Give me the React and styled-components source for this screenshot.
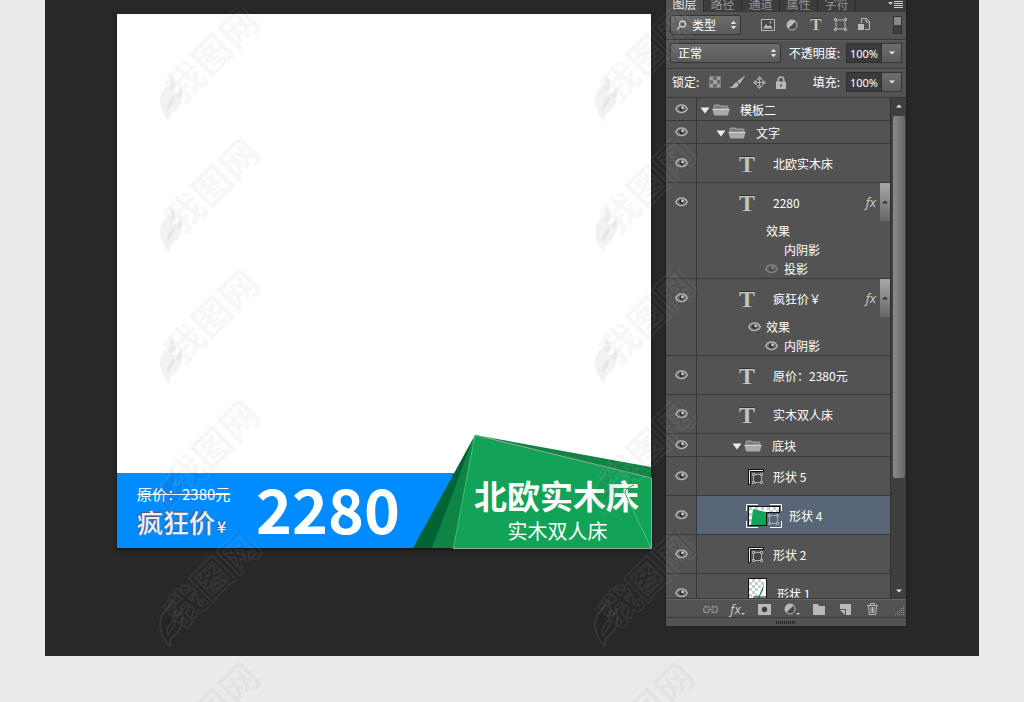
import React from 'react';
import styled, { createGlobalStyle, css } from 'styled-components';

const GlobalStyle = createGlobalStyle`
  * {
    box-sizing: border-box;
  }

  body {
    margin: 0;
    background: #ebebed;
    font-family: 'Noto Sans CJK SC', sans-serif;
  }

  button, select, input {
    margin: 0;
    padding: 0;
    border: 0;
    background: none;
    color: inherit;
    font: inherit;
  }

  svg {
    display: block;
    flex: none;
  }
`;

const Page = styled.div`
  position: relative;
  min-height: 100vh;
  padding: 0 45px 46px;
  overflow: hidden;
`;

const Workspace = styled.main`
  display: flex;
  align-items: flex-start;
  gap: 15px;
  padding: 0 73px 30px 72px;
  background: #282828;
`;

/* ---------- canvas ---------- */

const Canvas = styled.section`
  flex: 1;
  display: flex;
  flex-direction: column;
  justify-content: flex-end;
  aspect-ratio: 1;
  margin-top: 14px;
  background: #fff;
  box-shadow: 0 2px 4px rgba(0, 0, 0, 0.5);
`;

const Banner = styled.div`
  position: relative;
  display: flex;
  align-items: center;
  height: 75px;
  padding: 0 12px 0 20px;
  background: #008cff;
  color: #fff;
  white-space: nowrap;
`;

const PriceColumn = styled.div`
  width: 119px;
  padding-top: 6px;
`;

const OldPrice = styled.del`
  display: block;
  font-size: 15px;
  line-height: 20px;
`;

const CrazyPrice = styled.p`
  margin: 0;
  color: #eceef2;
  font-size: 26px;
  font-weight: 500;
  line-height: 36px;
  text-shadow: -1px -1px 1px #5a5560;
`;

const Yen = styled.small`
  margin-left: 2px;
  font-size: 16px;
`;

const BigPrice = styled.strong`
  padding-bottom: 6px;
  font-size: 61px;
  line-height: 68px;
`;

const Fold = styled.svg`
  position: absolute;
  right: -1px;
  bottom: -1px;
`;

const ProductTitle = styled.div`
  position: relative;
  margin-left: auto;
  padding-bottom: 2px;
  text-align: center;
`;

const Headline = styled.h1`
  margin: 0 0 2px;
  font-size: 33px;
  line-height: 40px;
`;

const Subline = styled.p`
  margin: 0;
  padding-left: 2px;
  font-size: 20px;
  line-height: 28px;
`;

/* ---------- panel ---------- */

const Panel = styled.aside`
  width: 240px;
  background: #535353;
  color: #fff;
  font-size: 12px;
  box-shadow: 0 0 2px #111;
`;

const Tabs = styled.nav`
  display: flex;
  height: 12px;
  overflow: hidden;
  background: #3c3c3c;
`;

const Tab = styled.button`
  width: 38px;
  height: 12px;
  padding-bottom: 4px;
  border-right: 1px solid #2a2a2a;
  background: ${({ $active }) => ($active ? '#535353' : 'transparent')};
  color: ${({ $active }) => ($active ? '#e4e4e4' : '#979797')};
  line-height: 8px;
`;

const PanelMenu = styled.button`
  margin: 0 3px 0 auto;
`;

const ToolRow = styled.div`
  display: flex;
  align-items: center;
  height: 29px;
  padding: 0 4px 2px;
  border-bottom: 1px solid #383838;
  box-shadow: inset 0 1px #5c5c5c;
`;

const FilterRow = styled(ToolRow)`
  height: 28px;
  box-shadow: none;
`;

const SelectBox = styled.div`
  position: relative;
  width: ${({ $width }) => $width}px;
  height: 20px;
  border: 1px solid #363636;
  border-radius: 2px;
  background: linear-gradient(#6d6d6d, #5a5a5a);

  select {
    width: 100%;
    height: 18px;
    padding-left: ${({ $inset }) => $inset}px;
    appearance: none;
    line-height: 18px;
  }

  svg {
    position: absolute;
    top: 4px;
    pointer-events: none;
  }

  svg.arrows {
    right: 3px;
  }

  svg.search {
    left: 5px;
  }
`;

const IconButton = styled.button`
  display: flex;
  align-items: center;
  justify-content: center;
  width: 24px;
  height: 18px;
  color: #b9b9b9;
`;

const FilterIcons = styled.div`
  display: flex;
  margin-left: 15px;
`;

const FilterSwitch = styled.button`
  width: 9px;
  height: 18px;
  margin-left: auto;
  border: 1px solid #303030;
  background: linear-gradient(#8a8a8a 0 8px, #3e3e3e 8px);
`;

const LockIcons = styled.div`
  display: flex;
  margin-left: 5px;

  button {
    width: 22px;
  }
`;

const Text = styled.span`
  line-height: 16px;
`;

const LockLabel = styled(Text)`
  padding-left: 2px;
`;

const ValueField = styled.label`
  display: flex;
  align-items: center;
  margin-left: auto;
  line-height: 16px;
`;

const ValueInput = styled.input`
  width: 36px;
  height: 20px;
  margin-left: 6px;
  border: 1px solid #303030;
  background: #3b3b3b;
  font-family: 'Noto Sans', sans-serif;
  font-size: 11px;
  text-align: center;
`;

const DropButton = styled.button`
  display: flex;
  align-items: center;
  justify-content: center;
  width: 20px;
  height: 20px;
  border: 1px solid #363636;
  border-left: 0;
  background: linear-gradient(#6d6d6d, #5a5a5a);
`;

const ListArea = styled.div`
  display: flex;
  height: 501px;
  border-bottom: 1px solid #383838;
`;

const LayerList = styled.ul`
  flex: 1;
  margin: 0;
  padding: 0;
  overflow: hidden;
  list-style: none;
`;

const LayerItem = styled.li`
  display: flex;
  border-bottom: 1px solid #383838;
`;

const EyeCell = styled.div`
  width: 31px;
  border-right: 1px solid #383838;
`;

const EyeButton = styled.button`
  display: flex;
  align-items: center;
  justify-content: center;
  width: 30px;
  height: ${({ $folder }) => ($folder ? 22 : 38)}px;
`;

const LayerBody = styled.div`
  flex: 1;
  background: ${({ $selected }) => ($selected ? '#596678' : 'transparent')};
`;

const LayerHead = styled.div`
  display: flex;
  align-items: center;
  height: 38px;
  padding-top: 1px;

  ${({ $depth }) =>
    $depth !== undefined &&
    css`
      height: 22px;
      padding-top: 2px;
      padding-left: ${3 + $depth * 16}px;
    `}
`;

const FolderMark = styled.span`
  display: flex;
  align-items: center;
  gap: 2px;
  width: 40px;
`;

const thumbPlace = {
  type: { left: 42, box: 34 },
  corner: { left: 51, box: 25 },
  selected: { left: 49, box: 43 },
  tall: { left: 51, box: 29 },
};

const Thumb = styled.span`
  width: ${({ $kind }) => thumbPlace[$kind].box}px;
  margin-left: ${({ $kind }) => thumbPlace[$kind].left}px;
`;

const TypeMark = styled.span`
  color: #c4c4c4;
  font-family: 'Liberation Serif', serif;
  font-size: ${({ $size }) => $size}px;
  font-weight: bold;
  line-height: 22px;
  text-shadow: 0 -1px #333;
`;

const FxMark = styled.span`
  color: #cfcfcf;
  font-family: 'Open Sans', sans-serif;
  font-size: 13px;
  font-style: italic;
  line-height: 18px;
`;

const FxEnd = styled.span`
  display: flex;
  align-items: center;
  gap: 4px;
  height: 38px;
  margin: -1px 0 0 auto;
`;

const FxToggle = styled.button`
  display: flex;
  align-items: center;
  justify-content: center;
  width: 10px;
  height: 38px;
  background: linear-gradient(#a9a9a9, #666);
`;

const EffectLine = styled.div`
  display: flex;
  align-items: center;
  height: 19px;
  padding-left: ${({ $child }) => ($child ? 68 : 51)}px;
`;

const EffectEye = styled.span`
  width: ${({ $child }) => ($child ? 19 : 18)}px;
  opacity: ${({ $dim }) => ($dim ? 0.5 : 1)};
`;

const ScrollTrack = styled.div`
  display: flex;
  flex-direction: column;
  align-items: center;
  width: 16px;
  padding: 6px 0 5px;
  border-left: 1px solid #303030;
  background: #3f3f3f;
`;

const ScrollThumb = styled.div`
  width: 12px;
  height: 362px;
  margin: 8px 0 auto;
  border-radius: 2px;
  background: linear-gradient(90deg, #8a8a8a, #686868);
`;

const Footer = styled.footer`
  display: flex;
  align-items: center;
  height: 19px;
  padding: 2px 0 0 31px;
  border-bottom: 1px solid #383838;
  box-shadow: inset 0 1px #666;

  button {
    width: 27px;
  }
`;

const Corner = styled.span`
  align-self: flex-end;
  margin-left: auto;
  padding: 0 1px 1px 0;
`;

const Grip = styled.div`
  display: flex;
  align-items: center;
  justify-content: center;
  height: 8px;
`;

/* ---------- watermark ---------- */

const Watermarks = styled.div`
  position: absolute;
  inset: 0;
  display: grid;
  grid-template-columns: 435px 435px;
  grid-auto-rows: 131px;
  padding: 8px 0 0 158px;
  overflow: hidden;
  pointer-events: none;
`;

/* ---------- icons ---------- */

const Eye = () => (
  <svg width="13" height="10" viewBox="0 0 13 10">
    <path d="M.8 5C3-.2 10-.2 12.200 5 10 9.600 3 9.600.8 5Z" fill="#5a5a5a" stroke="#b2b2b2" strokeWidth="1.500" />
    <circle cx="6.500" cy="4.700" r="2.800" fill="#2c2c2c" stroke="#8e8e8e" strokeWidth=".6" />
    <circle cx="7.500" cy="3.900" r="1.300" fill="#dadada" />
  </svg>
);

const Folder = () => (
  <svg width="18" height="12" viewBox="0 0 18 12">
    <path d="M2 5V2q0-1 1-1h4l1 1h7q1 0 1 1v2Z" fill="#7c7c7c" stroke="#b8b8b8" strokeWidth=".8" />
    <path d="M.5 5h17l-1.300 5.500q-.2 1-1.200 1H3q-1 0-1.200-1Z" fill="#aaa" />
    <path d="M.5 5.500h17" stroke="#d2d2d2" />
  </svg>
);

const Triangle = () => (
  <svg width="10" height="7" viewBox="0 0 10 7">
    <path d="M.5.5h9L5 6.500Z" fill="#eee" />
  </svg>
);

const Caret = ({ up }) => (
  <svg width="6" height="4" viewBox="0 0 6 4">
    <path d={up ? 'M0 3.500h6L3 .5Z' : 'M0 .5h6L3 3.500Z'} fill="#e6e6e6" />
  </svg>
);

const DarkCaret = () => (
  <svg width="6" height="4" viewBox="0 0 6 4">
    <path d="M0 3.500h6L3 .5Z" fill="#333" />
  </svg>
);

const Arrows = () => (
  <svg className="arrows" width="7" height="10" viewBox="0 0 7 10">
    <path d="M.8 4 3.500.8 6.200 4ZM.8 6l2.700 3.200L6.200 6Z" fill="#e2e2e2" />
  </svg>
);

const Search = () => (
  <svg className="search" width="11" height="11" viewBox="0 0 11 11" fill="none" stroke="#d2d2d2" strokeWidth="1.300">
    <circle cx="6.500" cy="4" r="3" />
    <path d="M4.300 6.200 1 9.500" />
  </svg>
);

const PixelIcon = () => (
  <svg width="14" height="12" viewBox="0 0 14 12">
    <path d="M.5.5h13v11H.5Z" fill="#494949" stroke="currentColor" />
    <path d="M2 9.500 5 5l2 2.500L9 6l3 3.500Z" fill="currentColor" />
    <circle cx="9.500" cy="3.500" r="1" fill="currentColor" />
  </svg>
);

const AdjustIcon = () => (
  <svg width="12" height="12" viewBox="0 0 12 12">
    <circle cx="6" cy="6" r="5" fill="#4a4a4a" stroke="currentColor" />
    <path d="M2.400 9.600A5 5 0 0 1 9.600 2.400Z" fill="currentColor" />
  </svg>
);

const ShapeIcon = () => (
  <svg width="13" height="13" viewBox="0 0 13 13" fill="#505050" stroke="currentColor">
    <path d="M2 2h9v9H2Z" fill="none" />
    <path d="M.5.5h2v2h-2ZM10.500.5h2v2h-2ZM.5 10.500h2v2h-2ZM10.500 10.500h2v2h-2Z" />
  </svg>
);

const SmartIcon = () => (
  <svg width="12" height="13" viewBox="0 0 12 13">
    <path d="M3.500 5V.5h5l3 3v8H7" fill="none" stroke="currentColor" />
    <path d="M8 .5V4h3.500" fill="none" stroke="currentColor" />
    <path d="M0 6h6v6H0Z" fill="currentColor" />
  </svg>
);

const CheckerIcon = () => (
  <svg width="12" height="12" viewBox="0 0 12 12">
    <path d="M0 0h12v12H0Z" fill="#6a6a6a" />
    <path d="M.5.5h11v11H.5Z" fill="none" stroke="#7d7d7d" />
    <path d="M1 1h3v3H1ZM8 1h3v3H8ZM4 4h4v4H4ZM1 8h3v3H1ZM8 8h3v3H8Z" fill="#a0a0a0" />
  </svg>
);

const BrushIcon = () => (
  <svg width="17" height="14" viewBox="0 0 17 14" fill="currentColor">
    <path d="M16.500.3 8 6.500l2.600 2.600ZM7.500 7.200C5 7.200 5 11.500.5 12.500c4 1.200 8.700.3 9-3Z" />
  </svg>
);

const MoveIcon = () => (
  <svg width="13" height="13" viewBox="0 0 13 13" fill="currentColor">
    <path d="M6 3h1v7H6ZM3 6h7v1H3Z" />
    <path d="m3.500 3.500 3-3.500 3 3.500ZM3.500 9.500l3 3.500 3-3.500ZM3.500 3.500l-3.500 3 3.500 3ZM9.500 3.500l3.500 3-3.500 3Z" />
    <path d="M5.500 2.700h2l-1-1.200ZM5.500 10.300h2l-1 1.200ZM2.700 5.500v2l-1.200-1ZM10.300 5.500v2l1.200-1Z" fill="#535353" />
  </svg>
);

const LockIcon = () => (
  <svg width="10" height="13" viewBox="0 0 10 13">
    <path d="M2.200 6V3.800a2.800 2.800 0 0 1 5.600 0V6" fill="none" stroke="currentColor" strokeWidth="1.500" />
    <path d="M0 5.500h10V13H0Z" fill="currentColor" />
    <path d="M4.400 8h1.200v3H4.400Z" fill="#444" />
  </svg>
);

const LinkIcon = () => (
  <svg width="15" height="9" viewBox="0 0 15 9" fill="none" stroke="#8b8b8b" strokeWidth="1.400">
    <path d="M6.500 2.500A2.500 2.500 0 0 0 4.500 1.500h-1a3 3 0 0 0 0 6h1a2.500 2.500 0 0 0 2-1M8.500 2.500a2.500 2.500 0 0 1 2-1h1a3 3 0 0 1 0 6h-1a2.500 2.500 0 0 1-2-1M4.500 4.500h6" />
  </svg>
);

const MaskIcon = () => (
  <svg width="13" height="11" viewBox="0 0 13 11">
    <path d="M0 0h13v11H0Z" fill="currentColor" />
    <circle cx="6.500" cy="5.500" r="2.700" fill="#3d3d3d" />
  </svg>
);

const GroupIcon = () => (
  <svg width="12" height="11" viewBox="0 0 12 11">
    <path d="M0 1q0-1 1-1h4l1 2h6v9H0Z" fill="currentColor" />
  </svg>
);

const NewIcon = () => (
  <svg width="11" height="11" viewBox="0 0 11 11">
    <path d="M0 0h11v11H6V5H0Z" fill="currentColor" />
    <path d="M0 6h5v5Z" fill="currentColor" />
  </svg>
);

const TrashIcon = () => (
  <svg width="11" height="12" viewBox="0 0 11 12" fill="none" stroke="currentColor">
    <path d="M0 2.500h11M3.500 2.500v-2h4v2M1.500 3l.7 8.500h6.600L9.500 3M4 4v6M5.500 4v6M7 4v6" />
  </svg>
);

const Dot = () => (
  <svg width="4" height="12" viewBox="0 0 4 12">
    <path d="M0 10h4l-2 2Z" fill="#ccc" />
  </svg>
);

/* ---------- thumbnails ---------- */

const CornerThumb = () => (
  <svg width="16" height="16" viewBox="0 0 16 16">
    <path d="M0 0h16v3H3v13H0Z" fill="#111" />
    <path d="M1.500 15V1.500H15" fill="none" stroke="#f3f3f3" />
    <g fill="#444" stroke="#c8c8c8" strokeWidth=".8">
      <path d="M5.500 5.500h8v8h-8Z" />
      <path d="M4.500 4.500h2v2h-2ZM12.500 4.500h2v2h-2ZM4.500 12.500h2v2h-2ZM12.500 12.500h2v2h-2Z" />
    </g>
  </svg>
);

const SelectedThumb = () => (
  <svg width="36" height="24" viewBox="0 0 36 24">
    <path d="M.5 7V.5H12M24 .5h11.500V7M35.500 17v6.500H24M12 23.500H.5V17" fill="none" stroke="#fff" />
    <path d="M2 2h32v7H21v13H2Z" fill="#111" />
    <path d="M3 3h30v5H20v13H3Z" fill="#fff" />
    <path d="M3 3h3v3H3ZM9 3h3v3H9ZM15 3h3v3h-3ZM21 3h3v3h-3ZM27 3h3v3h-3ZM24 6h3v2h-3ZM30 6h3v2h-3ZM3 9h3v3H3ZM3 15h3v3H3Z" fill="#ccc" />
    <path d="M7 5 20 8v13H5Z" fill="#12a356" />
    <g fill="#596678" stroke="#a9b6ca" strokeWidth=".9">
      <path d="M23.500 11.500h8v8h-8Z" />
      <path d="M22.500 10.500h2v2h-2ZM30.500 10.500h2v2h-2ZM22.500 18.500h2v2h-2ZM30.500 18.500h2v2h-2Z" />
    </g>
  </svg>
);

const TallThumb = () => (
  <svg width="19" height="32" viewBox="0 0 19 32">
    <path d="M.5.5h18v31H.5Z" fill="#fff" stroke="#111" />
    <path d="M4 1h3v3H4ZM10 1h3v3h-3ZM1 4h3v3H1ZM7 4h3v3H7ZM13 4h3v3h-3ZM4 7h3v3H4ZM10 7h3v3h-3ZM1 10h3v3H1ZM7 10h3v3H7ZM4 13h3v3H4ZM1 16h3v3H1ZM7 16h3v3H7Z" fill="#ccc" />
    <path d="m16 6-1 6-4 8h-1Z" fill="#0e7f46" />
    <path d="M5 19h13" stroke="#111" />
  </svg>
);

const thumbs = {
  type: <TypeMark $size={24}>T</TypeMark>,
  corner: <CornerThumb />,
  selected: <SelectedThumb />,
  tall: <TallThumb />,
};

const layers = [
  { name: '模板二', depth: 0 },
  { name: '文字', depth: 1 },
  { name: '北欧实木床', thumb: 'type' },
  {
    name: '2280',
    thumb: 'type',
    effects: [
      { name: '效果' },
      { name: '内阴影', child: true },
      { name: '投影', child: true, eye: true, dim: true },
    ],
  },
  {
    name: '疯狂价￥',
    thumb: 'type',
    effects: [
      { name: '效果', eye: true },
      { name: '内阴影', child: true, eye: true },
    ],
  },
  { name: '原价：2380元', thumb: 'type' },
  { name: '实木双人床', thumb: 'type' },
  { name: '底块', depth: 2 },
  { name: '形状 5', thumb: 'corner' },
  { name: '形状 4', thumb: 'selected', selected: true },
  { name: '形状 2', thumb: 'corner' },
  { name: '形状 1', thumb: 'tall' },
];

const Layer = ({ layer }) => {
  const isFolder = layer.depth !== undefined;
  return (
    <LayerItem>
      <EyeCell>
        <EyeButton $folder={isFolder} aria-label={layer.name}>
          <Eye />
        </EyeButton>
      </EyeCell>
      <LayerBody $selected={layer.selected}>
        <LayerHead $depth={layer.depth}>
          {isFolder ? (
            <FolderMark>
              <Triangle />
              <Folder />
            </FolderMark>
          ) : (
            <Thumb $kind={layer.thumb}>{thumbs[layer.thumb]}</Thumb>
          )}
          <Text>{layer.name}</Text>
          {layer.effects && (
            <FxEnd>
              <FxMark>fx</FxMark>
              <FxToggle aria-label="效果">
                <DarkCaret />
              </FxToggle>
            </FxEnd>
          )}
        </LayerHead>
        {layer.effects?.map((effect) => (
          <EffectLine key={effect.name} $child={effect.child}>
            <EffectEye $child={effect.child} $dim={effect.dim}>
              {effect.eye && <Eye />}
            </EffectEye>
            <Text>{effect.name}</Text>
          </EffectLine>
        ))}
      </LayerBody>
    </LayerItem>
  );
};

const PercentField = ({ label }) => (
  <>
    <ValueField>
      {label}
      <ValueInput defaultValue="100%" />
    </ValueField>
    <DropButton aria-label={label}>
      <Caret />
    </DropButton>
  </>
);

const LayersPanel = () => (
  <Panel>
    <Tabs>
      {['图层', '路径', '通道', '属性', '字符'].map((name, i) => (
        <Tab key={name} $active={i === 0}>
          {name}
        </Tab>
      ))}
      <PanelMenu aria-label="菜单">
        <svg width="15" height="12" viewBox="0 0 15 12">
          <path d="M0 2h5L2.500 5Z" fill="#ccc" />
          <path d="M6 1.500h9M6 3.500h9M6 5.500h9M6 7.500h9" stroke="#ccc" />
        </svg>
      </PanelMenu>
    </Tabs>
    <FilterRow>
      <SelectBox $width={71} $inset={21}>
        <Search />
        <select aria-label="类型">
          <option>类型</option>
        </select>
        <Arrows />
      </SelectBox>
      <FilterIcons>
        <IconButton aria-label="像素"><PixelIcon /></IconButton>
        <IconButton aria-label="调整"><AdjustIcon /></IconButton>
        <IconButton aria-label="文字"><TypeMark $size={17}>T</TypeMark></IconButton>
        <IconButton aria-label="形状"><ShapeIcon /></IconButton>
        <IconButton aria-label="智能对象"><SmartIcon /></IconButton>
      </FilterIcons>
      <FilterSwitch aria-label="过滤" />
    </FilterRow>
    <ToolRow>
      <SelectBox $width={111} $inset={7}>
        <select aria-label="混合模式">
          <option>正常</option>
        </select>
        <Arrows />
      </SelectBox>
      <PercentField label="不透明度:" />
    </ToolRow>
    <ToolRow>
      <LockLabel>锁定:</LockLabel>
      <LockIcons>
        <IconButton aria-label="透明像素"><CheckerIcon /></IconButton>
        <IconButton aria-label="图像像素"><BrushIcon /></IconButton>
        <IconButton aria-label="位置"><MoveIcon /></IconButton>
        <IconButton aria-label="全部"><LockIcon /></IconButton>
      </LockIcons>
      <PercentField label="填充:" />
    </ToolRow>
    <ListArea>
      <LayerList>
        {layers.map((layer) => (
          <Layer key={layer.name} layer={layer} />
        ))}
      </LayerList>
      <ScrollTrack>
        <Caret up />
        <ScrollThumb />
        <Caret />
      </ScrollTrack>
    </ListArea>
    <Footer>
      <IconButton aria-label="链接"><LinkIcon /></IconButton>
      <IconButton aria-label="样式"><FxMark>fx</FxMark><Dot /></IconButton>
      <IconButton aria-label="蒙版"><MaskIcon /></IconButton>
      <IconButton aria-label="调整图层"><AdjustIcon /><Dot /></IconButton>
      <IconButton aria-label="新建组"><GroupIcon /></IconButton>
      <IconButton aria-label="新建图层"><NewIcon /></IconButton>
      <IconButton aria-label="删除"><TrashIcon /></IconButton>
      <Corner>
        <svg width="10" height="10" viewBox="0 0 10 10">
          <path d="M8 0h1v1H8ZM6 2h1v1H6ZM8 2h1v1H8ZM4 4h1v1H4ZM6 4h1v1H6ZM8 4h1v1H8ZM2 6h1v1H2ZM4 6h1v1H4ZM6 6h1v1H6ZM8 6h1v1H8ZM0 8h1v1H0ZM2 8h1v1H2ZM4 8h1v1H4ZM6 8h1v1H6ZM8 8h1v1H8Z" fill="#8c8c8c" />
        </svg>
      </Corner>
    </Footer>
    <Grip>
      <svg width="20" height="3" viewBox="0 0 20 3">
        <path d="M0 1.500h20" stroke="#222" strokeWidth="3" strokeDasharray="1 1" />
      </svg>
    </Grip>
  </Panel>
);

const Poster = () => (
  <Canvas>
    <Banner>
      <PriceColumn>
        <OldPrice>原价：2380元</OldPrice>
        <CrazyPrice>
          疯狂价<Yen>¥</Yen>
        </CrazyPrice>
      </PriceColumn>
      <BigPrice>2280</BigPrice>
      <Fold width="239" height="115" viewBox="0 0 239 115">
        <path d="M62 1 0 114h20Z" fill="#006435" />
        <path d="M62 1 19 114h22Z" fill="#0e8545" />
        <path d="m62 1 176 32v12Z" fill="#0e8545" />
        <path d="m62 1 176 43v70H40Z" fill="#12a356" />
      </Fold>
      <ProductTitle>
        <Headline>北欧实木床</Headline>
        <Subline>实木双人床</Subline>
      </ProductTitle>
      <Fold width="239" height="115" viewBox="0 0 239 115" fill="none">
        <path d="m62 1 176.500 43v70.500H40" stroke="#9aa79d" />
        <path d="M62 1 40.500 114" stroke="#4fc484" strokeWidth=".8" />
        <path d="M221 51q-10 4-9 8l4 9" stroke="#3c5547" strokeWidth=".8" />
        <path d="m216 68 22 46" stroke="#5cc98b" strokeWidth=".8" />
      </Fold>
    </Banner>
  </Canvas>
);

const Watermark = () => (
  <svg width="110" height="122" viewBox="0 0 110 122">
    <g
      fill="rgba(0, 0, 0, 0.05)"
      stroke="rgba(255, 255, 255, 0.08)"
      strokeWidth="2"
      strokeLinejoin="round"
    >
      <text
        x="24"
        y="97"
        transform="rotate(-45 24 97)"
        fontFamily="Noto Sans CJK SC, sans-serif"
        fontSize="38"
        fontWeight="bold"
      >
        我图网
      </text>
      <path d="M12 114C3 106-1 91 5 82 9 77 13 75 13 68 18 74 19 80 15 85 21 84 23 80 23 78 27 90 22 100 14 105 11 108 12 110 12 114Z" />
      <path d="M10 104C6 96 14 92 16 87 19 95 12 97 10 104Z" />
    </g>
  </svg>
);

const App = () => (
  <>
    <GlobalStyle />
    <Page>
      <Workspace>
        <Poster />
        <LayersPanel />
      </Workspace>
      <Watermarks aria-hidden="true">
        {Array.from({ length: 12 }, (_, i) => (
          <Watermark key={i} />
        ))}
      </Watermarks>
    </Page>
  </>
);

export default App;
